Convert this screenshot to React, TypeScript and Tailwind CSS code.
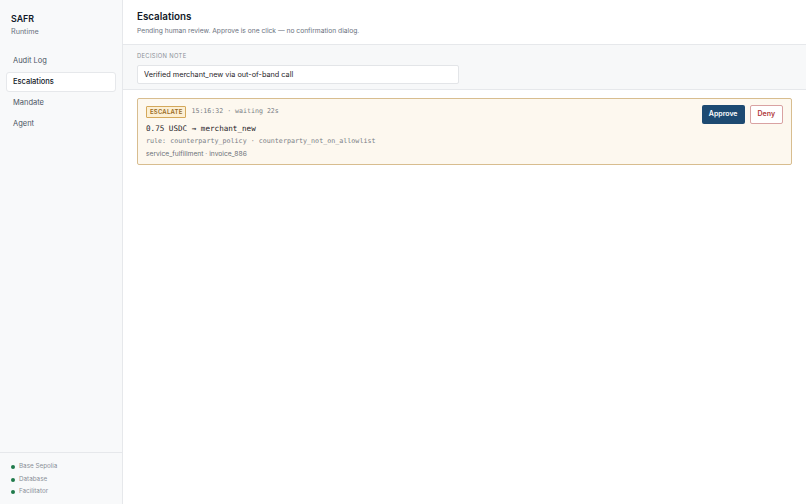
import { useState } from 'react';

const sans = { fontFamily: 'Inter, "Noto Sans", sans-serif' };
const mono = { fontFamily: '"DejaVu Sans Mono", "Liberation Mono", monospace' };

const navItems = ['Audit Log', 'Escalations', 'Mandate', 'Agent'];
const services = ['Base Sepolia', 'Database', 'Facilitator'];

const Sidebar = ({ active, onSelect }: { active: string; onSelect: (v: string) => void }) => (
  <aside className="flex flex-col w-[123px] shrink-0 bg-[#f8f9fa] border-r border-[#e6e8eb]">
    <div className="px-[11px] pt-[13px] pb-[14px]">
      <div className="text-[8.8px] leading-[11px] font-semibold text-[#111827]">SAFR</div>
      <div className="text-[7.2px] leading-[10px] mt-[3px] text-[#6b7280]">Runtime</div>
    </div>
    <nav className="flex flex-col gap-px px-[6px]">
      {navItems.map(item => (
        <button
          key={item}
          onClick={() => onSelect(item)}
          className={
            item === active
              ? 'h-[20px] flex items-center px-[6px] text-left text-[7.5px] font-medium text-[#111827] bg-white border border-[#e6e8eb] rounded-[3px]'
              : 'h-[20px] flex items-center px-[6px] text-left text-[7.5px] text-[#4b5563] border border-transparent'
          }
        >
          {item}
        </button>
      ))}
    </nav>
    <div className="mt-auto border-t border-[#e6e8eb] px-[11px] pt-[10px] pb-[8px] flex flex-col gap-[4.5px]">
      {services.map(s => (
        <div key={s} className="flex items-center gap-[4px] h-[8px]">
          <span className="w-[4px] h-[4px] rounded-full bg-[#1f7a4a]" />
          <span className="text-[6.3px] text-[#8b9098]">{s}</span>
        </div>
      ))}
    </div>
  </aside>
);

const EscalationCard = () => (
  <div className="flex justify-between border border-[#d8bd8f] rounded-[2px] bg-[#fdf8ef] pl-[8px] pr-[8px] pt-[6px] pb-[5px]">
    <div className="flex flex-col">
      <div className="flex items-center gap-[5px] h-[13px]">
        <span className="h-[12px] px-[3px] flex items-center border border-[#d4a85a] bg-[#fcefd4] rounded-[1px] text-[6px] font-semibold tracking-[0.03em] text-[#9a6a1c]">
          ESCALATE
        </span>
        <span className="text-[6.6px] text-[#7b7f86]" style={mono}>
          15:16:32 · waiting 22s
        </span>
      </div>
      <div className="mt-[6px] text-[7.6px] leading-[10px] text-[#1f2328]" style={mono}>
        0.75 USDC → merchant_new
      </div>
      <div className="mt-[2px] text-[6.7px] leading-[10px] text-[#7b7f86]" style={mono}>
        rule: counterparty_policy · counterparty_not_on_allowlist
      </div>
      <div className="mt-[3px] text-[6.7px] leading-[10px] text-[#6b7078]">
        service_fulfillment · invoice_886
      </div>
    </div>
    <div className="flex items-start gap-[5px]">
      <button className="h-[19px] px-[7px] rounded-[2px] bg-[#1d4a72] text-white text-[7px] font-semibold">
        Approve
      </button>
      <button className="h-[19px] px-[7px] rounded-[2px] bg-white border border-[#d9a2a2] text-[#b0393b] text-[7px] font-semibold">
        Deny
      </button>
    </div>
  </div>
);

export default function App() {
  const [active, setActive] = useState('Escalations');
  const [note, setNote] = useState('Verified merchant_new via out-of-band call');

  return (
    <div className="flex w-[806px] h-[504px] bg-white overflow-hidden" style={sans}>
      <Sidebar active={active} onSelect={setActive} />
      <main className="flex flex-col flex-1 min-w-0">
        <header className="h-[45px] px-[14px] pt-[10px] border-b border-[#e6e8eb]">
          <h1 className="text-[9.8px] leading-[13px] font-semibold text-[#111827]">Escalations</h1>
          <p className="mt-[3px] text-[6.7px] leading-[10px] text-[#6b7280]">
            Pending human review. Approve is one click — no confirmation dialog.
          </p>
        </header>
        <section className="h-[45px] px-[14px] pt-[8px] bg-[#f7f8f9] border-b border-[#e6e8eb]">
          <label className="block text-[5.8px] leading-[6px] tracking-[0.06em] text-[#8b9098] uppercase">
            Decision note
          </label>
          <input
            value={note}
            onChange={e => setNote(e.target.value)}
            className="mt-[4px] w-[322px] h-[19px] px-[6px] bg-white border border-[#e3e5e8] rounded-[2px] text-[7.3px] text-[#1f2328] outline-none"
          />
        </section>
        <div className="px-[14px] pt-[8px]">
          <EscalationCard />
        </div>
      </main>
    </div>
  );
}
